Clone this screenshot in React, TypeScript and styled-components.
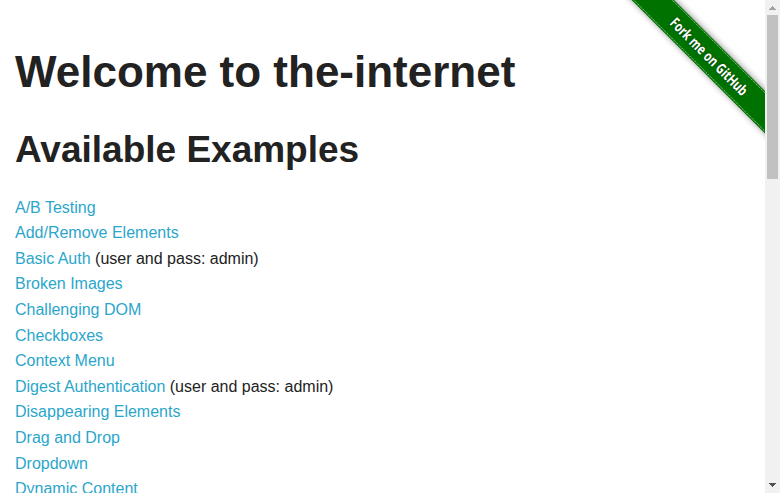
import React from "react";
import styled, { createGlobalStyle } from "styled-components";

const GlobalStyle = createGlobalStyle`
  *, *::before, *::after { box-sizing: border-box; }
  body {
    margin: 0;
    background: #fff;
    color: #222;
    font-family: "Liberation Sans", Arial, sans-serif;
    font-size: 16px;
    overflow: hidden;
  }
`;

const Window = styled.div`
  display: flex;
  height: 493px;
  overflow: hidden;
`;

const Page = styled.main`
  position: relative;
  flex: 1;
  min-width: 0;
  overflow: hidden;
  padding: 41px 15px 0;
`;

const Title = styled.h1`
  margin: 0 0 21.4px;
  font-size: 44px;
  line-height: 1.4;
`;

const Subtitle = styled.h2`
  margin: 0 0 18.8px;
  font-size: 37px;
  line-height: 1.4;
`;

const ExampleList = styled.ul`
  margin: 0;
  padding: 0;
  list-style: none;
  line-height: 1.6;
`;

const ExampleLink = styled.a`
  color: #2ba6cb;
  text-decoration: none;
`;

const Ribbon = styled.a`
  position: absolute;
  top: 0;
  right: 0;
  width: 149px;
  height: 149px;

  svg { display: block; }
`;

const RibbonLabel = styled.text`
  font: 700 14.5px "Noto Sans", "Open Sans", sans-serif;
  fill: #fff;
  text-anchor: middle;
  text-shadow: 0 0 3px rgba(0, 0, 0, 0.5);
`;

const Scrollbar = styled.div`
  display: flex;
  flex-direction: column;
  width: 15px;
  background: #f1f1f1;

  svg { display: block; flex: none; }
`;

const Track = styled.div`
  flex: 1;
  padding: 0 2px;
`;

const Thumb = styled.div`
  height: 164px;
  background: #c1c1c1;
`;

const examples: { name: string; note?: string }[] = [
  { name: "A/B Testing" },
  { name: "Add/Remove Elements" },
  { name: "Basic Auth", note: "(user and pass: admin)" },
  { name: "Broken Images" },
  { name: "Challenging DOM" },
  { name: "Checkboxes" },
  { name: "Context Menu" },
  { name: "Digest Authentication", note: "(user and pass: admin)" },
  { name: "Disappearing Elements" },
  { name: "Drag and Drop" },
  { name: "Dropdown" },
  { name: "Dynamic Content" },
];

function GitHubRibbon() {
  return (
    <Ribbon href="#" aria-label="Fork me on GitHub">
      <svg width="149" height="149" viewBox="0 0 149 149">
        <defs>
          <filter id="band-shadow" x="-10%" y="-60%" width="120%" height="220%">
            <feGaussianBlur stdDeviation="3.6" />
          </filter>
        </defs>
        <g transform="translate(36.8 0) rotate(45)">
          <rect x="-40" y="-15" width="280" height="29" fill="#000" opacity="0.5" filter="url(#band-shadow)" />
          <rect x="-40" y="-15" width="280" height="30" fill="#007200" />
          <g stroke="#a6d0a6" strokeWidth="0.9" strokeDasharray="1.4 0.9">
            <path d="M-40 -13.7H240" />
            <path d="M-40 13.5H240" />
          </g>
          <RibbonLabel x="79.7" y="5.4" textLength="103" lengthAdjust="spacingAndGlyphs">
            Fork me on GitHub
          </RibbonLabel>
        </g>
      </svg>
    </Ribbon>
  );
}

export default function App() {
  return (
    <Window>
      <GlobalStyle />
      <Page>
        <Title>Welcome to the-internet</Title>
        <Subtitle>Available Examples</Subtitle>
        <ExampleList>
          {examples.map(({ name, note }) => (
            <li key={name}>
              <ExampleLink href="#">{name}</ExampleLink>
              {note && ` ${note}`}
            </li>
          ))}
        </ExampleList>
        <GitHubRibbon />
      </Page>
      <Scrollbar>
        <svg width="15" height="15" shapeRendering="crispEdges">
          <path d="M7 6h1v1h1v1h1v1h1v1H4V9h1V8h1V7h1z" fill="#a3a3a3" />
        </svg>
        <Track>
          <Thumb />
        </Track>
        <svg width="15" height="15" shapeRendering="crispEdges">
          <path d="M4 5h7v1h-1v1H9v1H8v1H7V8H6V7H5V6H4z" fill="#505050" />
        </svg>
      </Scrollbar>
    </Window>
  );
}
